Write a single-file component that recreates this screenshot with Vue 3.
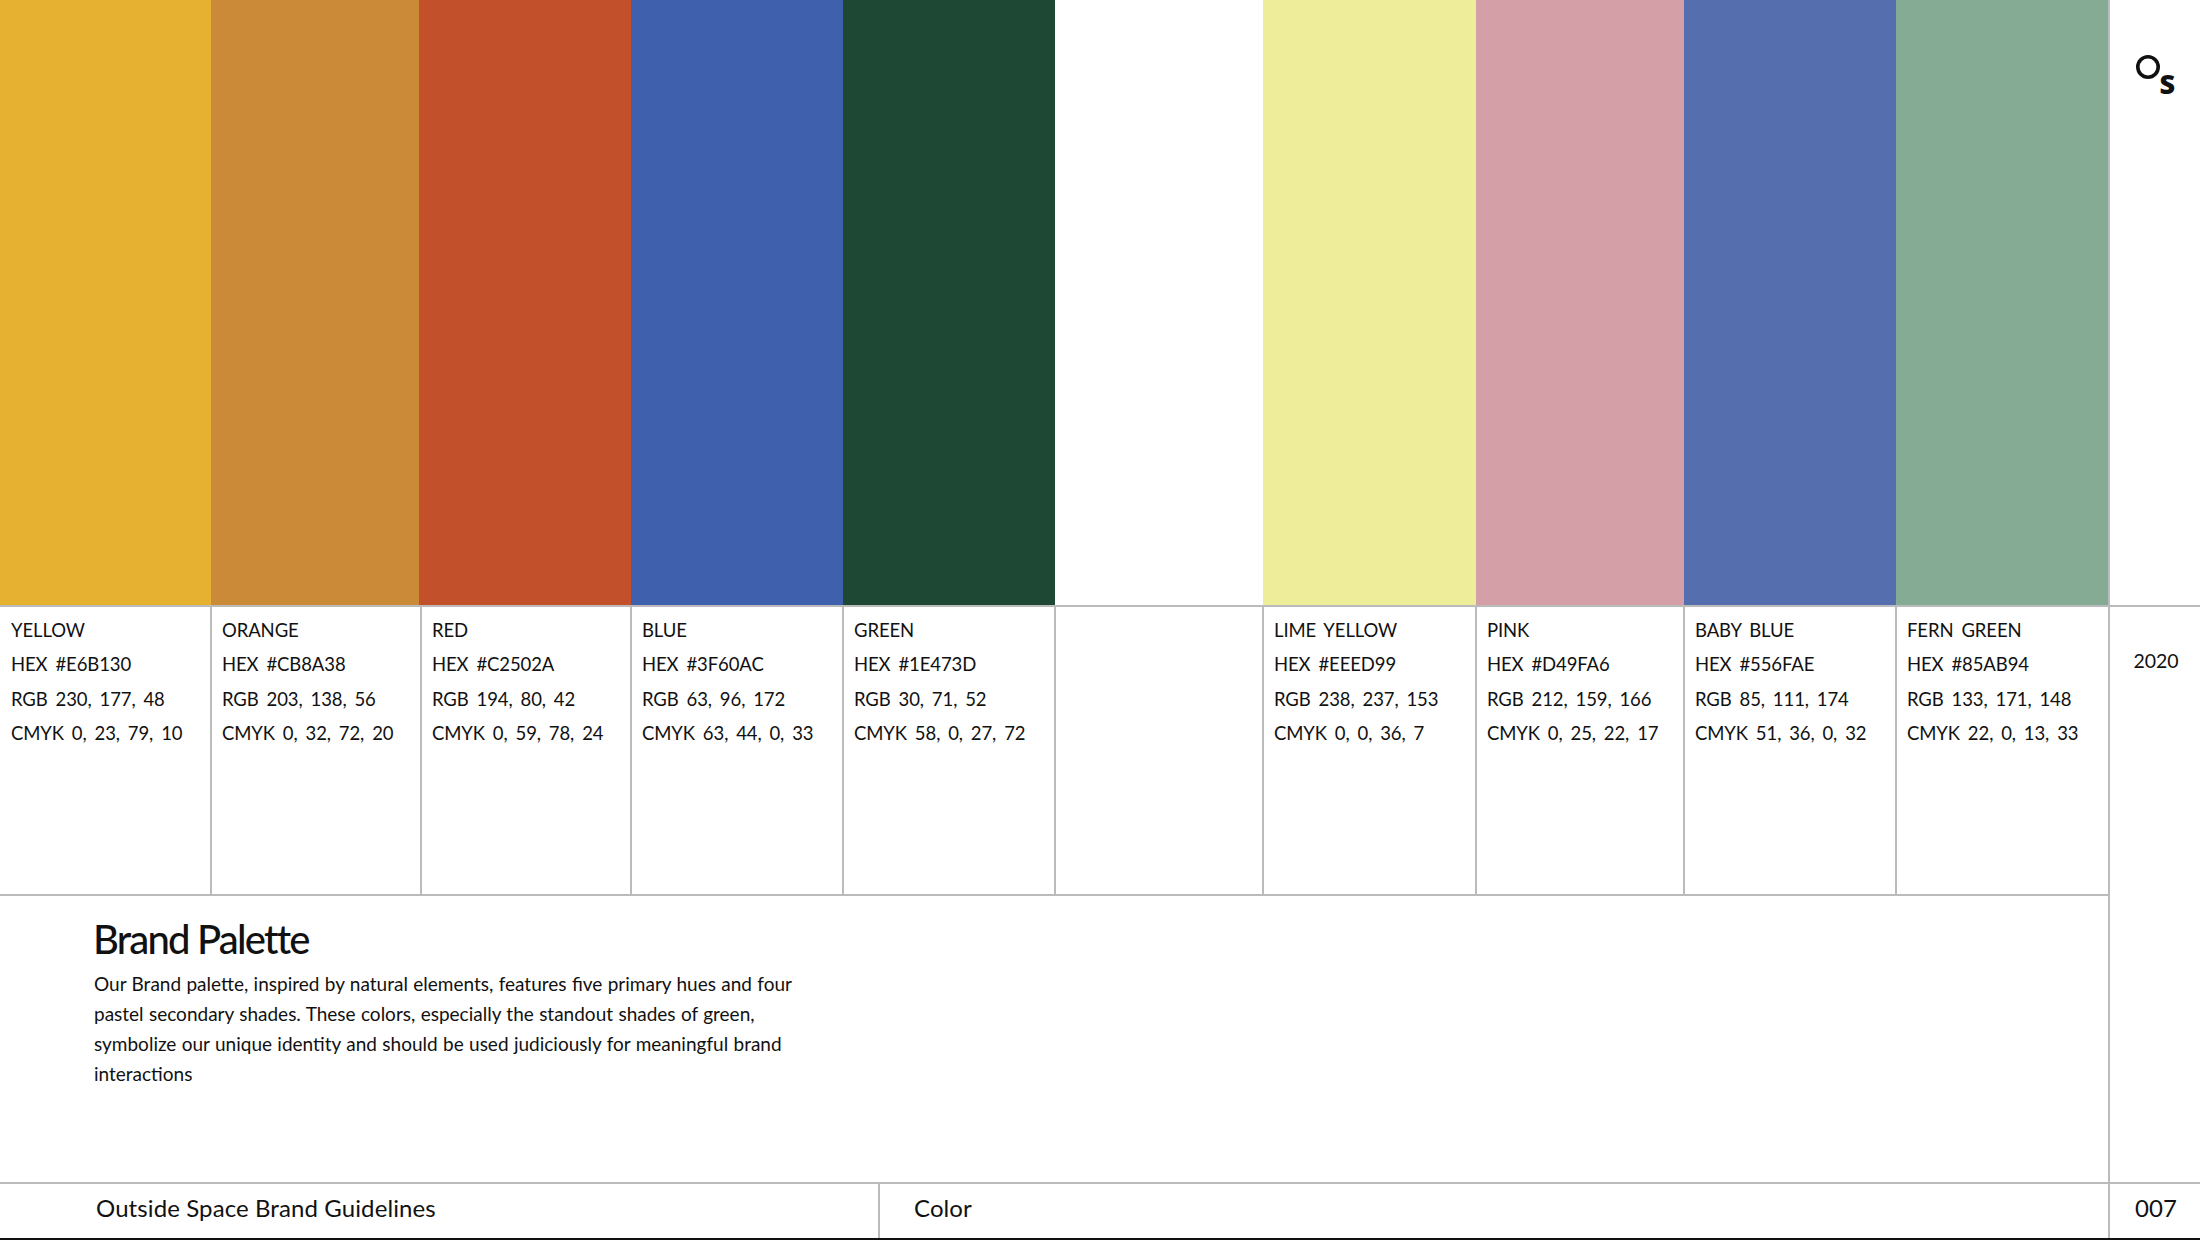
<template>
  <div class="page">
    <div class="main">
      <div class="swatches">
        <div v-for="c in colors" :key="c.id" class="swatch" :style="{ background: c.fill || c.hex || '#fff' }"></div>
      </div>
      <div class="specs">
        <div v-for="c in colors" :key="c.id" class="spec">
          <template v-if="c.name">
            <p>{{ c.name }}</p>
            <p>HEX {{ c.hex }}</p>
            <p>RGB {{ c.rgb }}</p>
            <p>CMYK {{ c.cmyk }}</p>
          </template>
        </div>
      </div>
      <div class="intro">
        <h1>Brand Palette</h1>
        <p>Our Brand palette, inspired by natural elements, features five primary hues and four<br>pastel secondary shades. These colors, especially the standout shades of green,<br>symbolize our unique identity and should be used judiciously for meaningful brand<br>interactions</p>
      </div>
      <div class="footer">
        <div class="foot-title">Outside Space Brand Guidelines</div>
        <div class="foot-section">Color</div>
      </div>
    </div>
    <div class="side">
      <div class="logo">
        <svg width="50" height="50" viewBox="0 0 50 50">
          <circle cx="14" cy="15" r="10.2" fill="none" stroke="#111" stroke-width="3.6" />
          <text x="25.5" y="42" class="logo-s">S</text>
        </svg>
      </div>
      <div class="year">2020</div>
      <div class="num">007</div>
    </div>
  </div>
</template>

<script setup>
// green swatch is painted with the rgb value, the printed hex differs
const colors = [
  { id: 1, name: 'YELLOW', hex: '#E6B130', rgb: '230, 177, 48', cmyk: '0, 23, 79, 10' },
  { id: 2, name: 'ORANGE', hex: '#CB8A38', rgb: '203, 138, 56', cmyk: '0, 32, 72, 20' },
  { id: 3, name: 'RED', hex: '#C2502A', rgb: '194, 80, 42', cmyk: '0, 59, 78, 24' },
  { id: 4, name: 'BLUE', hex: '#3F60AC', rgb: '63, 96, 172', cmyk: '63, 44, 0, 33' },
  { id: 5, name: 'GREEN', hex: '#1E473D', fill: '#1E4734', rgb: '30, 71, 52', cmyk: '58, 0, 27, 72' },
  { id: 6 },
  { id: 7, name: 'LIME YELLOW', hex: '#EEED99', rgb: '238, 237, 153', cmyk: '0, 0, 36, 7' },
  { id: 8, name: 'PINK', hex: '#D49FA6', rgb: '212, 159, 166', cmyk: '0, 25, 22, 17' },
  { id: 9, name: 'BABY BLUE', hex: '#556FAE', rgb: '85, 111, 174', cmyk: '51, 36, 0, 32' },
  { id: 10, name: 'FERN GREEN', hex: '#85AB94', rgb: '133, 171, 148', cmyk: '22, 0, 13, 33' },
]
</script>

<style>
html, body { margin: 0; background: #fff; }
</style>

<style scoped>
.page {
  width: 2200px;
  height: 1240px;
  display: flex;
  overflow: hidden;
  border-bottom: 2px solid #111;
  box-sizing: border-box;
  background: #fff;
  color: #111;
  font-family: Lato, "Noto Sans", sans-serif;
}
.main { width: 2108px; display: flex; flex-direction: column; }
.swatches {
  height: 605px;
  display: grid;
  grid-template-columns: 211px 208px 212px 212px 212px 208px 213px 208px 212px 212px;
}
.specs {
  height: 291px;
  display: grid;
  grid-template-columns: 211px 210px 210px 212px 212px 208px 213px 208px 212px 212px;
  border-top: 2px solid #bbb;
  border-bottom: 2px solid #bbb;
  box-sizing: border-box;
}
.spec {
  padding: 6px 0 0 11px;
  border-right: 2px solid #bbb;
  font-size: 18.5px;
  letter-spacing: -0.1px;
  word-spacing: 3.3px;
  line-height: 34.4px;
  white-space: nowrap;
  margin-right: -1px;
}
.spec:last-child { border-right: 0; margin-right: 0; }
.spec p { margin: 0; }
.intro { height: 286px; padding-left: 93px; box-sizing: border-box; }
.intro h1 {
  margin: 19px 0 0;
  font-size: 40px;
  line-height: 48px;
  font-weight: 500;
  letter-spacing: -1.8px;
}
.intro p {
  margin: 6px 0 0 1px;
  font-size: 19px;
  line-height: 30px;
  word-spacing: 0.5px;
  white-space: nowrap;
}
.footer {
  flex: 1;
  display: flex;
  align-items: center;
  border-top: 2px solid #bbb;
  font-size: 24px;
  letter-spacing: 0.1px;
}
.foot-title { width: 880px; height: 100%; padding: 0 0 8px 96px; box-sizing: border-box; display: flex; align-items: center; border-right: 2px solid #bbb; }
.foot-section { padding: 0 0 8px 34px; }
.side { flex: 1; display: flex; flex-direction: column; border-left: 2px solid #bbb; }
.logo { height: 605px; padding: 52px 0 0 24px; box-sizing: border-box; }
.logo svg { display: block; overflow: visible; }
.logo-s { font-family: "Open Sans", sans-serif; font-weight: 800; font-size: 27px; fill: #111; }
.year {
  flex: 1;
  border-top: 2px solid #bbb;
  padding: 37px 0 0 2px;
  text-align: center;
  font-size: 19.5px;
  line-height: 34px;
}
.num {
  height: 56px;
  padding: 0 0 7px 2px;
  box-sizing: border-box;
  border-top: 2px solid #bbb;
  display: flex;
  align-items: center;
  justify-content: center;
  font-size: 24px;
}
</style>
